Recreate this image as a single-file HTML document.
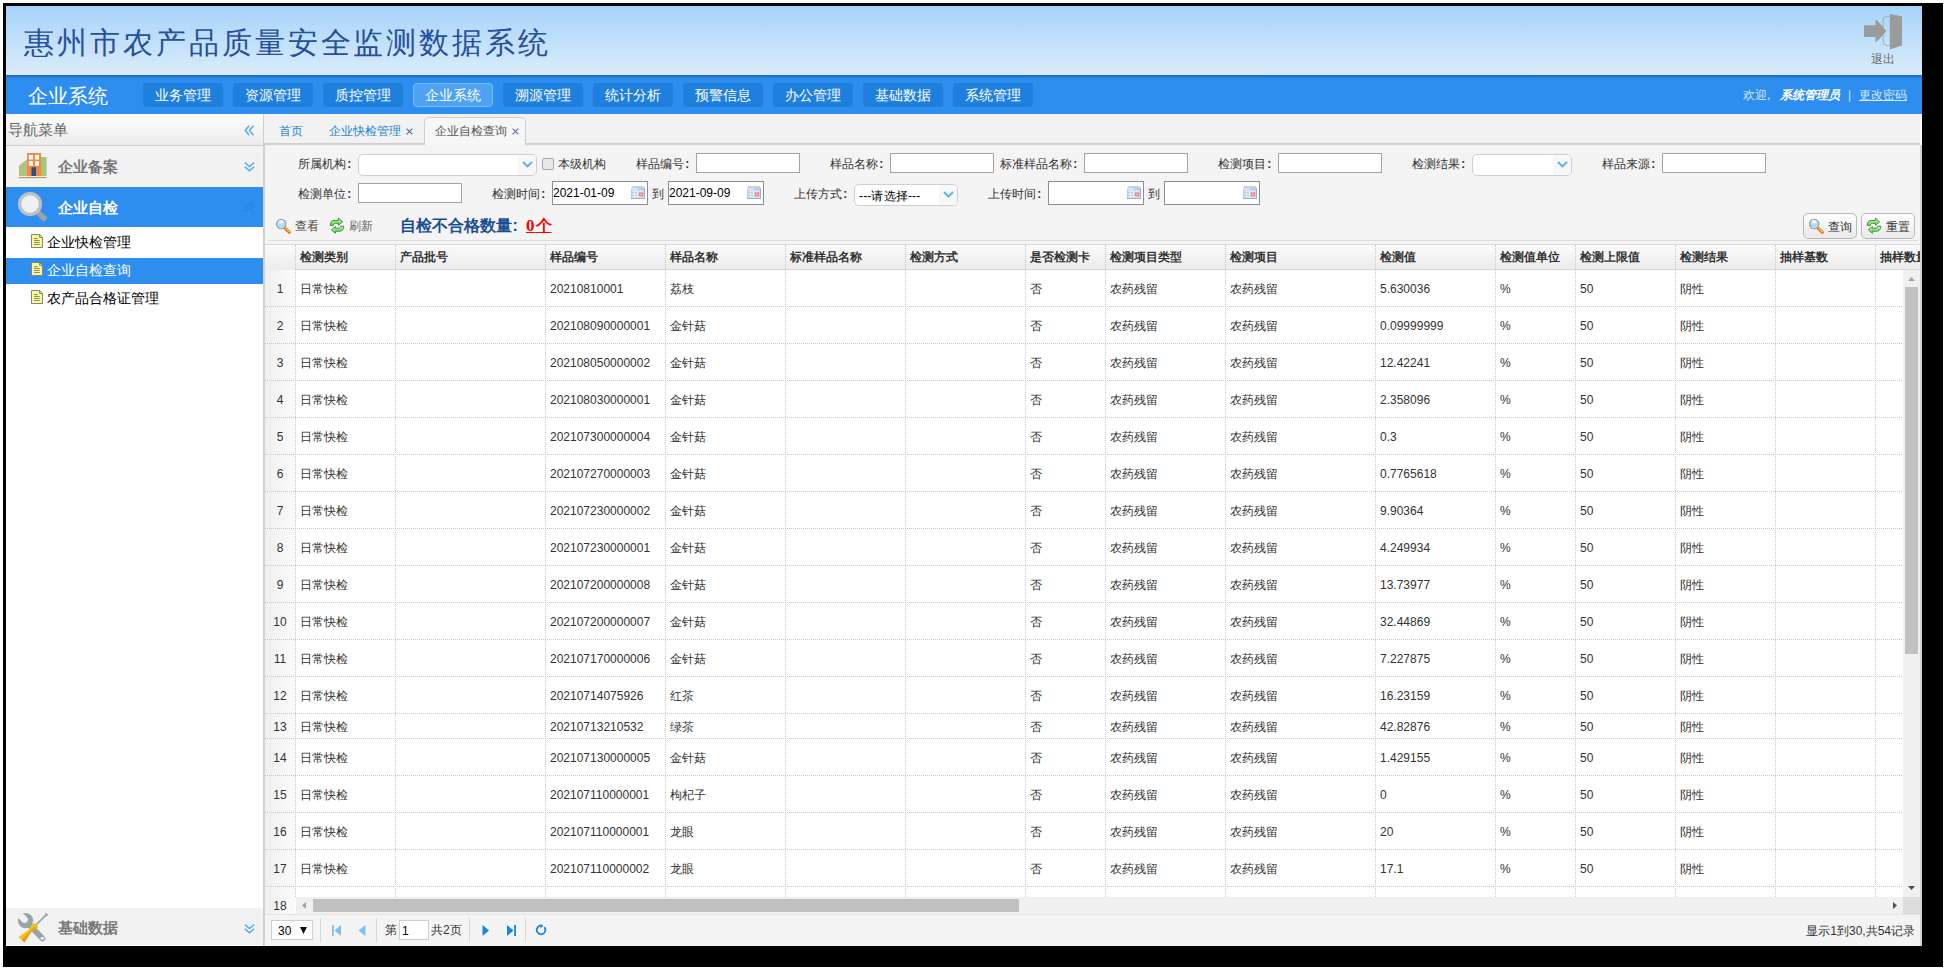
<!DOCTYPE html>
<html><head><meta charset="utf-8">
<style>
*{box-sizing:border-box;margin:0;padding:0}
html,body{width:1948px;height:972px;overflow:hidden;background:#fff;font-family:"Liberation Sans",sans-serif;font-size:12px;color:#333}
.abs{position:absolute}
#frame{position:absolute;left:3px;top:3px;width:1940px;height:964px;background:#000}
#app{position:absolute;left:6px;top:6px;width:1916px;height:940px;background:#fff;overflow:hidden}
#hdr{position:absolute;left:0;top:0;width:1916px;height:69px;background:linear-gradient(#a6d3f9,#dbecfb)}
#title{position:absolute;left:18px;top:16.5px;font-size:29.5px;color:#27509a;letter-spacing:2.95px;white-space:nowrap;line-height:40px}
#logout{position:absolute;left:1858px;top:8px;width:40px;height:56px}
#nav{position:absolute;left:0;top:69px;width:1916px;height:39px;background:linear-gradient(#1d68bd 0,#2e8ef0 4px,#2e8ef0 100%)}
#sysname{position:absolute;left:22px;top:6.5px;font-size:20px;color:#fff;line-height:28px;white-space:nowrap}
.nb{position:absolute;top:8px;width:80px;height:24px;background:#1f7fdc;border-radius:4px;color:#fff;font-size:14px;line-height:24px;text-align:center;white-space:nowrap}
.nb.on{background:#4ea2f3;border:1px solid #7dbaf6;line-height:22px}
.wl{position:absolute;top:12px;font-size:12px;color:#d6e8fb;white-space:nowrap;line-height:16px}
#welcome{position:absolute;right:14px;top:12px;font-size:12px;color:#d6e8fb;white-space:nowrap;line-height:16px}
#welcome b{font-style:italic;color:#fff}
#welcome u{color:#d6e8fb}
/* sidebar */
#side{position:absolute;left:0;top:108px;width:258px;height:832px;background:#fff;border-right:1px solid #cfcfcf}
#sh{position:absolute;left:0;top:0;width:257px;height:32px;background:linear-gradient(#fdfdfd,#ececec);border-bottom:1px solid #ccc}
#sh span{position:absolute;left:2px;top:7px;font-size:15px;color:#666;line-height:18px}
.ph{position:absolute;left:0;width:257px;background:#f2f2f2}
.ph .t{position:absolute;left:52px;font-size:15px;font-weight:bold;color:#777;line-height:18px;white-space:nowrap}
.si{position:absolute;left:0;width:257px;height:26px;font-size:14px;color:#000;line-height:25px;white-space:nowrap}
.si .ic{position:absolute;left:25px;top:4px;width:12px;height:14px}
.si span{position:absolute;left:41px;top:0}
/* main */
#main{position:absolute;left:258px;top:108px;width:1656px;height:832px;background:#f4f4f4}
#tabs{position:absolute;left:0;top:0;width:1656px;height:31px;background:#f2f2f2;border-bottom:2px solid #cfcfcf}

#tabs .tb{position:absolute;top:9px;font-size:12px;line-height:16px;color:#1a85d6;white-space:nowrap}
#tabs .x{color:#6b8fb8;font-size:12px}
#acttab{position:absolute;left:160px;top:3px;width:102px;height:28px;background:#f6f6f6;border:1px solid #cfcfcf;border-bottom:none;border-radius:5px 5px 0 0}
#form{position:absolute;left:0;top:31px;width:1658px;height:801px;background:#f4f4f4;box-shadow:inset 1px 0 #d2d2d2,inset -2px 0 #d2d2d2}
.co{display:inline-block;width:12px;padding-left:1.2px;font-style:normal;text-align:left;font-weight:bold;position:relative;top:0.5px}
.co2{display:inline-block;width:14px;padding-left:0.5px;font-style:normal;text-align:left}
.lb{position:absolute;font-size:12px;line-height:16px;color:#333;white-space:nowrap;text-align:right}
.ip{position:absolute;height:20px;background:#fff;border:1px solid #a3a3a3}
.dt{position:absolute;height:24px;background:#fff;border:1px solid #8c8c8c;font-size:12px;line-height:23px;color:#000;padding-left:0;white-space:nowrap}
.dt svg{position:absolute;right:2px;top:4px}
.sel{position:absolute;height:22px;background:#fff;border:1px solid #cfcfcf;border-radius:5px;overflow:hidden}
.sel .ar{position:absolute;right:0;top:0;width:18px;height:20px;background:#f7f7f7}
.sel svg{position:absolute;right:3px;top:6px}
.btn{position:absolute;height:26px;border:1px solid #b9b9b9;border-radius:5px;background:linear-gradient(#fefefe,#e9e9e9);font-size:12px;line-height:24px;color:#333;white-space:nowrap}
#grid{position:absolute;left:1px;top:130px;width:1655px;height:670px;background:#fff;border-top:1px solid #dcdcdc;overflow:hidden}
.gh{position:absolute;left:0;top:0;width:1655px;height:25px;background:linear-gradient(#fafafa,#ececec);border-bottom:1px solid #d6d6d6}
.c{position:absolute;font-size:12px;color:#333;white-space:nowrap;line-height:16px}
.hc{position:absolute;top:4px;font-size:12px;font-weight:bold;color:#333;white-space:nowrap;line-height:16px}
.vl{position:absolute;width:0;border-left:1px dotted #c8c8c8}
.hl{position:absolute;height:0;border-top:1px dotted #c8c8c8}
.rn{position:absolute;left:0;width:30px;background:linear-gradient(90deg,#efefef,#fbfbfb);text-align:center;font-size:12px;color:#333}
</style></head><body>
<div id="frame"></div>
<div id="app">
  <div id="hdr">
    <div id="title">惠州市农产品质量安全监测数据系统</div>
<svg class="abs" style="left:1854px;top:6px" width="46" height="46" viewBox="1860 12 46 46">
<path d="M1865 25.2 H1875.5 V20.5 Q1875.8 19.3 1877 20.3 L1885.8 30.6 Q1886.4 31.2 1885.8 31.8 L1877 41.5 Q1875.8 42.5 1875.5 41.3 V37 H1865 Q1864 37 1864 36 V26.2 Q1864 25.2 1865 25.2Z" fill="#9b9b9b"/>
<path d="M1883.2 29 V20 Q1883.2 16.5 1886.5 16.5 H1889.5 M1883.2 33.5 V42 Q1883.2 45.5 1886.5 45.5 H1889.5" fill="none" stroke="#a3a3a3" stroke-width="0.9"/>
<path d="M1889.8 14 L1902 16.2 V45.6 L1889.8 49.4Z" fill="#9b9b9b"/>
</svg>
<div class="abs" style="left:1865px;top:45px;font-size:12px;line-height:16px;color:#6a6a6a">退出</div>
  </div>
  <div id="nav">
    <div id="sysname">企业系统</div>
    <div class="nb" style="left:137px">业务管理</div>
    <div class="nb" style="left:227px">资源管理</div>
    <div class="nb" style="left:317px">质控管理</div>
    <div class="nb on" style="left:407px">企业系统</div>
    <div class="nb" style="left:497px">溯源管理</div>
    <div class="nb" style="left:587px">统计分析</div>
    <div class="nb" style="left:677px">预警信息</div>
    <div class="nb" style="left:767px">办公管理</div>
    <div class="nb" style="left:857px">基础数据</div>
    <div class="nb" style="left:947px">系统管理</div>
    <div class="wl" style="left:1737px">欢迎,</div><div class="wl" style="left:1774px;font-weight:bold;font-style:italic;color:#fff">系统管理员</div><div class="wl" style="left:1842px">|</div><div class="wl" style="left:1853px;text-decoration:underline">更改密码</div>
  </div>
  <div id="side">
    <div id="sh"><span>导航菜单</span>
      <svg class="abs" style="left:238px;top:11px" width="11" height="11" viewBox="0 0 11 11"><path d="M5.2 0.8 L1.2 5.5 L5.2 10.2 M9.5 0.8 L5.5 5.5 L9.5 10.2" fill="none" stroke="#56acec" stroke-width="1.5"/></svg>
    </div>
    <div class="ph" style="top:32px;height:41px">
      <svg class="abs" style="left:13px;top:7px" width="29" height="27" viewBox="0 0 29 27">
        <path d="M0 12.5 L8 6.5 L8 23 L0 23 Z" fill="#abc57e"/>
        <rect x="22" y="4" width="5.6" height="19" fill="#abc57e"/>
        <rect x="8" y="0" width="14" height="23" fill="#f7843f"/>
        <rect x="9.8" y="1.9" width="4.1" height="4.6" fill="#fff"/><rect x="15.9" y="1.9" width="4.1" height="4.6" fill="#fff"/>
        <rect x="9.8" y="8.2" width="4.1" height="4.6" fill="#fff"/><rect x="15.9" y="8.2" width="4.1" height="4.6" fill="#fff"/>
        <rect x="12.5" y="14.3" width="4.5" height="8.7" fill="#1f5288"/>
        <rect x="0" y="24" width="27.4" height="1.2" fill="#d4914a"/>
      </svg>
      <span class="t" style="top:12px">企业备案</span>
      <svg class="abs" style="left:238px;top:15px" width="11" height="11" viewBox="0 0 11 11"><path d="M0.8 1.5 L5.5 5.5 L10.2 1.5 M0.8 5.8 L5.5 9.8 L10.2 5.8" fill="none" stroke="#56acec" stroke-width="1.5"/></svg>
    </div>
    <div class="ph" style="top:73px;height:40px;background:#2e8ef0">
      <svg class="abs" style="left:11px;top:5px" width="32" height="32" viewBox="0 0 32 32">
        <path d="M20.5 20 L28.8 28" stroke="#98a4a3" stroke-width="5.4"/>
        <circle cx="13" cy="12" r="10.4" fill="#eef1f3" stroke="#bdc1c4" stroke-width="3.4"/>
      </svg>
      <span class="t" style="top:12px;color:#fff">企业自检</span>
      <svg class="abs" style="left:238px;top:15px" width="11" height="11" viewBox="0 0 11 11"><path d="M1 5 L5.5 1 L10 5 M1 10 L5.5 6 L10 10" fill="none" stroke="#2a82d6" stroke-width="1.3"/></svg>
    </div>
    <div class="si" style="top:116px"><svg class="ic" viewBox="0 0 12 14" width="12" height="14"><path d="M0.5 0.5 H8.6 L11.5 3.4 V13.5 H0.5 Z" fill="#fcf98e" stroke="#838383"/><path d="M8.6 0.5 V3.4 H11.5" fill="none" stroke="#838383"/><path d="M3 4.6 H6.8 M3 6.5 H8.8 M3 8.5 H8.8 M3 10.5 H8.8" stroke="#7d7d7d" stroke-width="0.9"/></svg><span>企业快检管理</span></div>
    <div class="si" style="top:144px;height:26px;background:#2e8ef0;color:#fff"><svg class="ic" viewBox="0 0 12 14" width="12" height="14"><path d="M0.5 0.5 H8.6 L11.5 3.4 V13.5 H0.5 Z" fill="#fcf98e" stroke="#838383"/><path d="M8.6 0.5 V3.4 H11.5" fill="none" stroke="#838383"/><path d="M3 4.6 H6.8 M3 6.5 H8.8 M3 8.5 H8.8 M3 10.5 H8.8" stroke="#7d7d7d" stroke-width="0.9"/></svg><span>企业自检查询</span></div>
    <div class="si" style="top:172px"><svg class="ic" viewBox="0 0 12 14" width="12" height="14"><path d="M0.5 0.5 H8.6 L11.5 3.4 V13.5 H0.5 Z" fill="#fcf98e" stroke="#838383"/><path d="M8.6 0.5 V3.4 H11.5" fill="none" stroke="#838383"/><path d="M3 4.6 H6.8 M3 6.5 H8.8 M3 8.5 H8.8 M3 10.5 H8.8" stroke="#7d7d7d" stroke-width="0.9"/></svg><span>农产品合格证管理</span></div>
    <div class="ph" style="top:794px;height:37px">
      <svg class="abs" style="left:10px;top:3px" width="34" height="34" viewBox="16 911 34 34">
<path d="M28.5 924 L42.5 938.5" stroke="#95a5a6" stroke-width="5.6" stroke-linecap="round"/>
<circle cx="25.5" cy="920.6" r="7.6" fill="#95a5a6"/>
<path d="M24.6 919.6 L16 911" stroke="#f0f0f0" stroke-width="6.6" stroke-linecap="round"/>
<ellipse cx="42.4" cy="938.3" rx="1.8" ry="1.5" fill="#f0f0f0"/>
<path d="M46.6 914.3 L35.5 925.5" stroke="#95a5a6" stroke-width="1.7"/>
<path d="M45.3 913.5 L47.6 915.7" stroke="#95a5a6" stroke-width="1.8"/>
<path d="M33.8 922.8 L37.8 926.6 L36.8 928 L31 932 L24.5 942.5 L18.5 937 L28.5 930 L32.2 924.5Z" fill="#f7c41a"/>
<path d="M37.8 926.6 L36.8 928 L31 932 L24.5 942.5 L21.5 939.8 L30 931 L34 927Z" fill="#f39c12"/>
</svg>
      <span class="t" style="top:11px">基础数据</span>
      <svg class="abs" style="left:238px;top:15px" width="11" height="11" viewBox="0 0 11 11"><path d="M0.8 1.5 L5.5 5.5 L10.2 1.5 M0.8 5.8 L5.5 9.8 L10.2 5.8" fill="none" stroke="#56acec" stroke-width="1.5"/></svg>
    </div>
  </div>
  <div id="main">
<div id="tabs">
<div class="tb" style="left:15px">首页</div>
<div class="tb" style="left:65px">企业快检管理</div><svg class="abs" style="left:141.5px;top:14px" width="7" height="7" viewBox="0 0 7 7"><path d="M0.6 0.6 L6.4 6.4 M6.4 0.6 L0.6 6.4" stroke="#4f6f98" stroke-width="1.15"/></svg>
<div id="acttab"></div>
<div class="tb" style="left:171px;color:#555">企业自检查询</div><svg class="abs" style="left:247.5px;top:14px" width="7" height="7" viewBox="0 0 7 7"><path d="M0.6 0.6 L6.4 6.4 M6.4 0.6 L0.6 6.4" stroke="#5f7496" stroke-width="1.15"/></svg>
</div>
<div id="form"><div class="lb" style="right:1564px;top:10.5px">所属机构<i class="co">:</i></div>
<div class="sel" style="left:94px;top:9px;width:179px"><div class="ar"></div><svg width="11" height="7" viewBox="0 0 11 7"><path d="M1 1 L5.5 5.5 L10 1" fill="none" stroke="#58b0ee" stroke-width="1.8"/></svg></div>
<div class="abs" style="left:278px;top:13px;width:12px;height:12px;border:1px solid #a8a8a8;border-radius:2px;background:#e8e8e8"></div>
<div class="lb" style="left:294px;top:10.5px">本级机构</div>
<div class="lb" style="right:1226px;top:10.5px">样品编号<i class="co">:</i></div>
<div class="ip" style="left:432px;top:8px;width:104px"></div>
<div class="lb" style="right:1032px;top:10.5px">样品名称<i class="co">:</i></div>
<div class="ip" style="left:626px;top:8px;width:104px"></div>
<div class="lb" style="right:838px;top:10.5px">标准样品名称<i class="co">:</i></div>
<div class="ip" style="left:820px;top:8px;width:104px"></div>
<div class="lb" style="right:644px;top:10.5px">检测项目<i class="co">:</i></div>
<div class="ip" style="left:1014px;top:8px;width:104px"></div>
<div class="lb" style="right:450px;top:10.5px">检测结果<i class="co">:</i></div>
<div class="sel" style="left:1208px;top:9px;width:100px"><div class="ar"></div><svg width="11" height="7" viewBox="0 0 11 7"><path d="M1 1 L5.5 5.5 L10 1" fill="none" stroke="#58b0ee" stroke-width="1.8"/></svg></div>
<div class="lb" style="right:260px;top:10.5px">样品来源<i class="co">:</i></div>
<div class="ip" style="left:1398px;top:8px;width:104px"></div>
<div class="lb" style="right:1564px;top:40.5px">检测单位<i class="co">:</i></div>
<div class="ip" style="left:94px;top:38px;width:104px"></div>
<div class="lb" style="right:1370px;top:40.5px">检测时间<i class="co">:</i></div>
<div class="dt" style="left:288px;top:36px;width:96px">2021-01-09<svg width="14" height="13" viewBox="0 0 14 13"><rect x="0.8" y="0" width="12.4" height="2" fill="#cfcfcf"/><rect x="0" y="2" width="14" height="11" fill="#b9ccee"/><rect x="0.5" y="2" width="6" height="2" fill="#d9e4fa"/><path d="M0 12.5H14M13.5 2V13" stroke="#9aaecb" stroke-width="1"/><path d="M1 5.2H13M1 8.2H13M1 11H13M3.6 4V12M6.6 4V12M9.6 4V12" stroke="#eef3fc" stroke-width="0.9"/><circle cx="10" cy="8.5" r="2.2" fill="#ee8462"/><path d="M10 7.5V9.6" stroke="#fff" stroke-width="0.8"/></svg></div>
<div class="lb" style="left:388px;top:40.5px">到</div>
<div class="dt" style="left:404px;top:36px;width:96px">2021-09-09<svg width="14" height="13" viewBox="0 0 14 13"><rect x="0.8" y="0" width="12.4" height="2" fill="#cfcfcf"/><rect x="0" y="2" width="14" height="11" fill="#b9ccee"/><rect x="0.5" y="2" width="6" height="2" fill="#d9e4fa"/><path d="M0 12.5H14M13.5 2V13" stroke="#9aaecb" stroke-width="1"/><path d="M1 5.2H13M1 8.2H13M1 11H13M3.6 4V12M6.6 4V12M9.6 4V12" stroke="#eef3fc" stroke-width="0.9"/><circle cx="10" cy="8.5" r="2.2" fill="#ee8462"/><path d="M10 7.5V9.6" stroke="#fff" stroke-width="0.8"/></svg></div>
<div class="lb" style="right:1068px;top:40.5px">上传方式<i class="co">:</i></div>
<div class="sel" style="left:590px;top:39px;width:104px;font-size:12px;line-height:22px;color:#000;padding-left:4px;letter-spacing:0.15px">---请选择---<div class="ar"></div><svg width="11" height="7" viewBox="0 0 11 7"><path d="M1 1 L5.5 5.5 L10 1" fill="none" stroke="#58b0ee" stroke-width="1.8"/></svg></div>
<div class="lb" style="right:874px;top:40.5px">上传时间<i class="co">:</i></div>
<div class="dt" style="left:784px;top:36px;width:96px"><svg width="14" height="13" viewBox="0 0 14 13"><rect x="0.8" y="0" width="12.4" height="2" fill="#cfcfcf"/><rect x="0" y="2" width="14" height="11" fill="#b9ccee"/><rect x="0.5" y="2" width="6" height="2" fill="#d9e4fa"/><path d="M0 12.5H14M13.5 2V13" stroke="#9aaecb" stroke-width="1"/><path d="M1 5.2H13M1 8.2H13M1 11H13M3.6 4V12M6.6 4V12M9.6 4V12" stroke="#eef3fc" stroke-width="0.9"/><circle cx="10" cy="8.5" r="2.2" fill="#ee8462"/><path d="M10 7.5V9.6" stroke="#fff" stroke-width="0.8"/></svg></div>
<div class="lb" style="left:884px;top:40.5px">到</div>
<div class="dt" style="left:900px;top:36px;width:96px"><svg width="14" height="13" viewBox="0 0 14 13"><rect x="0.8" y="0" width="12.4" height="2" fill="#cfcfcf"/><rect x="0" y="2" width="14" height="11" fill="#b9ccee"/><rect x="0.5" y="2" width="6" height="2" fill="#d9e4fa"/><path d="M0 12.5H14M13.5 2V13" stroke="#9aaecb" stroke-width="1"/><path d="M1 5.2H13M1 8.2H13M1 11H13M3.6 4V12M6.6 4V12M9.6 4V12" stroke="#eef3fc" stroke-width="0.9"/><circle cx="10" cy="8.5" r="2.2" fill="#ee8462"/><path d="M10 7.5V9.6" stroke="#fff" stroke-width="0.8"/></svg></div>
<div class="abs" style="left:7px;top:69px"><svg width="24" height="24" viewBox="0 0 24 24"><defs><radialGradient id="lgA" cx="0.5" cy="0.25" r="0.75"><stop offset="0" stop-color="#f6fcff"/><stop offset="0.6" stop-color="#a9d5fa"/><stop offset="1" stop-color="#cfe9ff"/></radialGradient></defs><path d="M14.2 14.2 L18.3 18.3" stroke="#d8541a" stroke-width="3" stroke-linecap="round"/><path d="M14.4 14.0 L18.4 18.0" stroke="#f9c22e" stroke-width="1.6" stroke-linecap="round"/><circle cx="10.2" cy="10" r="4.7" fill="url(#lgA)" stroke="#9a9a9a" stroke-width="1.1"/></svg></div>
<div class="lb" style="left:31px;top:73px;color:#444">查看</div>
<div class="abs" style="left:61px;top:69px"><svg width="24" height="24" viewBox="0 0 24 24"><defs><linearGradient id="lgR" x1="0" y1="0" x2="0" y2="1"><stop offset="0" stop-color="#c4f5ae"/><stop offset="1" stop-color="#6fd34f"/></linearGradient></defs><path d="M5.2 11.4 C5.2 8 6.8 6.4 10 6.4 L13.5 6.4 L13.5 4.2 L17.6 7.8 L13.5 11.3 L13.5 9.3 L10.6 9.3 C9.2 9.3 8.5 10.2 8.5 11.4 Z" fill="url(#lgR)" stroke="#2f8a34" stroke-width="0.9" stroke-linejoin="round"/><path d="M18.8 12.2 C18.8 15.6 17.2 17.2 14 17.2 L10.4 17.2 L10.4 19.3 L6.3 15.8 L10.4 12.6 L10.4 14.3 L13.4 14.3 C14.8 14.3 15.5 13.4 15.5 12.2 Z" fill="url(#lgR)" stroke="#2f8a34" stroke-width="0.9" stroke-linejoin="round"/></svg></div>
<div class="lb" style="left:85px;top:73px;color:#666">刷新</div>
<div class="lb" style="left:136px;top:70px;font-size:16px;line-height:22px;font-weight:bold;color:#1a4d94">自检不合格数量<i class="co2">:</i><span style="color:#f00;text-decoration:underline"><span style="font-family:'Liberation Serif',serif;font-size:17px;letter-spacing:1px">0</span>个</span></div>
<div class="btn" style="left:1539px;top:68px;width:54px"><span class="abs" style="left:0;top:0"><svg width="24" height="24" viewBox="0 0 24 24"><defs><radialGradient id="lgB" cx="0.5" cy="0.25" r="0.75"><stop offset="0" stop-color="#f6fcff"/><stop offset="0.6" stop-color="#a9d5fa"/><stop offset="1" stop-color="#cfe9ff"/></radialGradient></defs><path d="M14.2 14.2 L18.3 18.3" stroke="#d8541a" stroke-width="3" stroke-linecap="round"/><path d="M14.4 14.0 L18.4 18.0" stroke="#f9c22e" stroke-width="1.6" stroke-linecap="round"/><circle cx="10.2" cy="10" r="4.7" fill="url(#lgB)" stroke="#9a9a9a" stroke-width="1.1"/></svg></span><span class="abs" style="left:24px;top:1px">查询</span></div>
<div class="btn" style="left:1597px;top:68px;width:54px"><span class="abs" style="left:0;top:0"><svg width="24" height="24" viewBox="0 0 24 24"><defs><linearGradient id="lgS" x1="0" y1="0" x2="0" y2="1"><stop offset="0" stop-color="#c4f5ae"/><stop offset="1" stop-color="#6fd34f"/></linearGradient></defs><path d="M5.2 11.4 C5.2 8 6.8 6.4 10 6.4 L13.5 6.4 L13.5 4.2 L17.6 7.8 L13.5 11.3 L13.5 9.3 L10.6 9.3 C9.2 9.3 8.5 10.2 8.5 11.4 Z" fill="url(#lgS)" stroke="#2f8a34" stroke-width="0.9" stroke-linejoin="round"/><path d="M18.8 12.2 C18.8 15.6 17.2 17.2 14 17.2 L10.4 17.2 L10.4 19.3 L6.3 15.8 L10.4 12.6 L10.4 14.3 L13.4 14.3 C14.8 14.3 15.5 13.4 15.5 12.2 Z" fill="url(#lgS)" stroke="#2f8a34" stroke-width="0.9" stroke-linejoin="round"/></svg></span><span class="abs" style="left:24px;top:1px">重置</span></div>
<div class="abs" style="left:4px;top:95px;width:1650px;height:1px;background:#dedede"></div></div>
<!--GRID--><div id="grid"><div class="gh"></div>
<div class="rn" style="top:0;height:25px;background:linear-gradient(#fafafa,#ececec)"></div>
<div class="hc" style="left:35px">检测类别</div>
<div class="hc" style="left:135px">产品批号</div>
<div class="hc" style="left:285px">样品编号</div>
<div class="hc" style="left:405px">样品名称</div>
<div class="hc" style="left:525px">标准样品名称</div>
<div class="hc" style="left:645px">检测方式</div>
<div class="hc" style="left:765px">是否检测卡</div>
<div class="hc" style="left:845px">检测项目类型</div>
<div class="hc" style="left:965px">检测项目</div>
<div class="hc" style="left:1115px">检测值</div>
<div class="hc" style="left:1235px">检测值单位</div>
<div class="hc" style="left:1315px">检测上限值</div>
<div class="hc" style="left:1415px">检测结果</div>
<div class="hc" style="left:1515px">抽样基数</div>
<div class="hc" style="left:1615px">抽样数量</div>
<div class="rn" style="top:25px;height:37px;line-height:38px">1</div>
<div class="c" style="left:35px;top:35.5px">日常快检</div>
<div class="c" style="left:285px;top:35.5px">20210810001</div>
<div class="c" style="left:405px;top:35.5px">荔枝</div>
<div class="c" style="left:765px;top:35.5px">否</div>
<div class="c" style="left:845px;top:35.5px">农药残留</div>
<div class="c" style="left:965px;top:35.5px">农药残留</div>
<div class="c" style="left:1115px;top:35.5px">5.630036</div>
<div class="c" style="left:1235px;top:35.5px">%</div>
<div class="c" style="left:1315px;top:35.5px">50</div>
<div class="c" style="left:1415px;top:35.5px">阴性</div>
<div class="hl" style="left:0;top:61px;width:1637px"></div>
<div class="rn" style="top:62px;height:37px;line-height:38px">2</div>
<div class="c" style="left:35px;top:72.5px">日常快检</div>
<div class="c" style="left:285px;top:72.5px">202108090000001</div>
<div class="c" style="left:405px;top:72.5px">金针菇</div>
<div class="c" style="left:765px;top:72.5px">否</div>
<div class="c" style="left:845px;top:72.5px">农药残留</div>
<div class="c" style="left:965px;top:72.5px">农药残留</div>
<div class="c" style="left:1115px;top:72.5px">0.09999999</div>
<div class="c" style="left:1235px;top:72.5px">%</div>
<div class="c" style="left:1315px;top:72.5px">50</div>
<div class="c" style="left:1415px;top:72.5px">阴性</div>
<div class="hl" style="left:0;top:98px;width:1637px"></div>
<div class="rn" style="top:99px;height:37px;line-height:38px">3</div>
<div class="c" style="left:35px;top:109.5px">日常快检</div>
<div class="c" style="left:285px;top:109.5px">202108050000002</div>
<div class="c" style="left:405px;top:109.5px">金针菇</div>
<div class="c" style="left:765px;top:109.5px">否</div>
<div class="c" style="left:845px;top:109.5px">农药残留</div>
<div class="c" style="left:965px;top:109.5px">农药残留</div>
<div class="c" style="left:1115px;top:109.5px">12.42241</div>
<div class="c" style="left:1235px;top:109.5px">%</div>
<div class="c" style="left:1315px;top:109.5px">50</div>
<div class="c" style="left:1415px;top:109.5px">阴性</div>
<div class="hl" style="left:0;top:135px;width:1637px"></div>
<div class="rn" style="top:136px;height:37px;line-height:38px">4</div>
<div class="c" style="left:35px;top:146.5px">日常快检</div>
<div class="c" style="left:285px;top:146.5px">202108030000001</div>
<div class="c" style="left:405px;top:146.5px">金针菇</div>
<div class="c" style="left:765px;top:146.5px">否</div>
<div class="c" style="left:845px;top:146.5px">农药残留</div>
<div class="c" style="left:965px;top:146.5px">农药残留</div>
<div class="c" style="left:1115px;top:146.5px">2.358096</div>
<div class="c" style="left:1235px;top:146.5px">%</div>
<div class="c" style="left:1315px;top:146.5px">50</div>
<div class="c" style="left:1415px;top:146.5px">阴性</div>
<div class="hl" style="left:0;top:172px;width:1637px"></div>
<div class="rn" style="top:173px;height:37px;line-height:38px">5</div>
<div class="c" style="left:35px;top:183.5px">日常快检</div>
<div class="c" style="left:285px;top:183.5px">202107300000004</div>
<div class="c" style="left:405px;top:183.5px">金针菇</div>
<div class="c" style="left:765px;top:183.5px">否</div>
<div class="c" style="left:845px;top:183.5px">农药残留</div>
<div class="c" style="left:965px;top:183.5px">农药残留</div>
<div class="c" style="left:1115px;top:183.5px">0.3</div>
<div class="c" style="left:1235px;top:183.5px">%</div>
<div class="c" style="left:1315px;top:183.5px">50</div>
<div class="c" style="left:1415px;top:183.5px">阴性</div>
<div class="hl" style="left:0;top:209px;width:1637px"></div>
<div class="rn" style="top:210px;height:37px;line-height:38px">6</div>
<div class="c" style="left:35px;top:220.5px">日常快检</div>
<div class="c" style="left:285px;top:220.5px">202107270000003</div>
<div class="c" style="left:405px;top:220.5px">金针菇</div>
<div class="c" style="left:765px;top:220.5px">否</div>
<div class="c" style="left:845px;top:220.5px">农药残留</div>
<div class="c" style="left:965px;top:220.5px">农药残留</div>
<div class="c" style="left:1115px;top:220.5px">0.7765618</div>
<div class="c" style="left:1235px;top:220.5px">%</div>
<div class="c" style="left:1315px;top:220.5px">50</div>
<div class="c" style="left:1415px;top:220.5px">阴性</div>
<div class="hl" style="left:0;top:246px;width:1637px"></div>
<div class="rn" style="top:247px;height:37px;line-height:38px">7</div>
<div class="c" style="left:35px;top:257.5px">日常快检</div>
<div class="c" style="left:285px;top:257.5px">202107230000002</div>
<div class="c" style="left:405px;top:257.5px">金针菇</div>
<div class="c" style="left:765px;top:257.5px">否</div>
<div class="c" style="left:845px;top:257.5px">农药残留</div>
<div class="c" style="left:965px;top:257.5px">农药残留</div>
<div class="c" style="left:1115px;top:257.5px">9.90364</div>
<div class="c" style="left:1235px;top:257.5px">%</div>
<div class="c" style="left:1315px;top:257.5px">50</div>
<div class="c" style="left:1415px;top:257.5px">阴性</div>
<div class="hl" style="left:0;top:283px;width:1637px"></div>
<div class="rn" style="top:284px;height:37px;line-height:38px">8</div>
<div class="c" style="left:35px;top:294.5px">日常快检</div>
<div class="c" style="left:285px;top:294.5px">202107230000001</div>
<div class="c" style="left:405px;top:294.5px">金针菇</div>
<div class="c" style="left:765px;top:294.5px">否</div>
<div class="c" style="left:845px;top:294.5px">农药残留</div>
<div class="c" style="left:965px;top:294.5px">农药残留</div>
<div class="c" style="left:1115px;top:294.5px">4.249934</div>
<div class="c" style="left:1235px;top:294.5px">%</div>
<div class="c" style="left:1315px;top:294.5px">50</div>
<div class="c" style="left:1415px;top:294.5px">阴性</div>
<div class="hl" style="left:0;top:320px;width:1637px"></div>
<div class="rn" style="top:321px;height:37px;line-height:38px">9</div>
<div class="c" style="left:35px;top:331.5px">日常快检</div>
<div class="c" style="left:285px;top:331.5px">202107200000008</div>
<div class="c" style="left:405px;top:331.5px">金针菇</div>
<div class="c" style="left:765px;top:331.5px">否</div>
<div class="c" style="left:845px;top:331.5px">农药残留</div>
<div class="c" style="left:965px;top:331.5px">农药残留</div>
<div class="c" style="left:1115px;top:331.5px">13.73977</div>
<div class="c" style="left:1235px;top:331.5px">%</div>
<div class="c" style="left:1315px;top:331.5px">50</div>
<div class="c" style="left:1415px;top:331.5px">阴性</div>
<div class="hl" style="left:0;top:357px;width:1637px"></div>
<div class="rn" style="top:358px;height:37px;line-height:38px">10</div>
<div class="c" style="left:35px;top:368.5px">日常快检</div>
<div class="c" style="left:285px;top:368.5px">202107200000007</div>
<div class="c" style="left:405px;top:368.5px">金针菇</div>
<div class="c" style="left:765px;top:368.5px">否</div>
<div class="c" style="left:845px;top:368.5px">农药残留</div>
<div class="c" style="left:965px;top:368.5px">农药残留</div>
<div class="c" style="left:1115px;top:368.5px">32.44869</div>
<div class="c" style="left:1235px;top:368.5px">%</div>
<div class="c" style="left:1315px;top:368.5px">50</div>
<div class="c" style="left:1415px;top:368.5px">阴性</div>
<div class="hl" style="left:0;top:394px;width:1637px"></div>
<div class="rn" style="top:395px;height:37px;line-height:38px">11</div>
<div class="c" style="left:35px;top:405.5px">日常快检</div>
<div class="c" style="left:285px;top:405.5px">202107170000006</div>
<div class="c" style="left:405px;top:405.5px">金针菇</div>
<div class="c" style="left:765px;top:405.5px">否</div>
<div class="c" style="left:845px;top:405.5px">农药残留</div>
<div class="c" style="left:965px;top:405.5px">农药残留</div>
<div class="c" style="left:1115px;top:405.5px">7.227875</div>
<div class="c" style="left:1235px;top:405.5px">%</div>
<div class="c" style="left:1315px;top:405.5px">50</div>
<div class="c" style="left:1415px;top:405.5px">阴性</div>
<div class="hl" style="left:0;top:431px;width:1637px"></div>
<div class="rn" style="top:432px;height:37px;line-height:38px">12</div>
<div class="c" style="left:35px;top:442.5px">日常快检</div>
<div class="c" style="left:285px;top:442.5px">20210714075926</div>
<div class="c" style="left:405px;top:442.5px">红茶</div>
<div class="c" style="left:765px;top:442.5px">否</div>
<div class="c" style="left:845px;top:442.5px">农药残留</div>
<div class="c" style="left:965px;top:442.5px">农药残留</div>
<div class="c" style="left:1115px;top:442.5px">16.23159</div>
<div class="c" style="left:1235px;top:442.5px">%</div>
<div class="c" style="left:1315px;top:442.5px">50</div>
<div class="c" style="left:1415px;top:442.5px">阴性</div>
<div class="hl" style="left:0;top:468px;width:1637px"></div>
<div class="rn" style="top:469px;height:25px;line-height:26px">13</div>
<div class="c" style="left:35px;top:473.5px">日常快检</div>
<div class="c" style="left:285px;top:473.5px">20210713210532</div>
<div class="c" style="left:405px;top:473.5px">绿茶</div>
<div class="c" style="left:765px;top:473.5px">否</div>
<div class="c" style="left:845px;top:473.5px">农药残留</div>
<div class="c" style="left:965px;top:473.5px">农药残留</div>
<div class="c" style="left:1115px;top:473.5px">42.82876</div>
<div class="c" style="left:1235px;top:473.5px">%</div>
<div class="c" style="left:1315px;top:473.5px">50</div>
<div class="c" style="left:1415px;top:473.5px">阴性</div>
<div class="hl" style="left:0;top:493px;width:1637px"></div>
<div class="rn" style="top:494px;height:37px;line-height:38px">14</div>
<div class="c" style="left:35px;top:504.5px">日常快检</div>
<div class="c" style="left:285px;top:504.5px">202107130000005</div>
<div class="c" style="left:405px;top:504.5px">金针菇</div>
<div class="c" style="left:765px;top:504.5px">否</div>
<div class="c" style="left:845px;top:504.5px">农药残留</div>
<div class="c" style="left:965px;top:504.5px">农药残留</div>
<div class="c" style="left:1115px;top:504.5px">1.429155</div>
<div class="c" style="left:1235px;top:504.5px">%</div>
<div class="c" style="left:1315px;top:504.5px">50</div>
<div class="c" style="left:1415px;top:504.5px">阴性</div>
<div class="hl" style="left:0;top:530px;width:1637px"></div>
<div class="rn" style="top:531px;height:37px;line-height:38px">15</div>
<div class="c" style="left:35px;top:541.5px">日常快检</div>
<div class="c" style="left:285px;top:541.5px">202107110000001</div>
<div class="c" style="left:405px;top:541.5px">枸杞子</div>
<div class="c" style="left:765px;top:541.5px">否</div>
<div class="c" style="left:845px;top:541.5px">农药残留</div>
<div class="c" style="left:965px;top:541.5px">农药残留</div>
<div class="c" style="left:1115px;top:541.5px">0</div>
<div class="c" style="left:1235px;top:541.5px">%</div>
<div class="c" style="left:1315px;top:541.5px">50</div>
<div class="c" style="left:1415px;top:541.5px">阴性</div>
<div class="hl" style="left:0;top:567px;width:1637px"></div>
<div class="rn" style="top:568px;height:37px;line-height:38px">16</div>
<div class="c" style="left:35px;top:578.5px">日常快检</div>
<div class="c" style="left:285px;top:578.5px">202107110000001</div>
<div class="c" style="left:405px;top:578.5px">龙眼</div>
<div class="c" style="left:765px;top:578.5px">否</div>
<div class="c" style="left:845px;top:578.5px">农药残留</div>
<div class="c" style="left:965px;top:578.5px">农药残留</div>
<div class="c" style="left:1115px;top:578.5px">20</div>
<div class="c" style="left:1235px;top:578.5px">%</div>
<div class="c" style="left:1315px;top:578.5px">50</div>
<div class="c" style="left:1415px;top:578.5px">阴性</div>
<div class="hl" style="left:0;top:604px;width:1637px"></div>
<div class="rn" style="top:605px;height:37px;line-height:38px">17</div>
<div class="c" style="left:35px;top:615.5px">日常快检</div>
<div class="c" style="left:285px;top:615.5px">202107110000002</div>
<div class="c" style="left:405px;top:615.5px">龙眼</div>
<div class="c" style="left:765px;top:615.5px">否</div>
<div class="c" style="left:845px;top:615.5px">农药残留</div>
<div class="c" style="left:965px;top:615.5px">农药残留</div>
<div class="c" style="left:1115px;top:615.5px">17.1</div>
<div class="c" style="left:1235px;top:615.5px">%</div>
<div class="c" style="left:1315px;top:615.5px">50</div>
<div class="c" style="left:1415px;top:615.5px">阴性</div>
<div class="hl" style="left:0;top:641px;width:1637px"></div>
<div class="rn" style="top:642px;height:37px;line-height:38px">18</div>
<div class="hl" style="left:0;top:678px;width:1637px"></div>
<div class="vl" style="left:30px;top:0;height:652px"></div>
<div class="vl" style="left:130px;top:0;height:652px"></div>
<div class="vl" style="left:280px;top:0;height:652px"></div>
<div class="vl" style="left:400px;top:0;height:652px"></div>
<div class="vl" style="left:520px;top:0;height:652px"></div>
<div class="vl" style="left:640px;top:0;height:652px"></div>
<div class="vl" style="left:760px;top:0;height:652px"></div>
<div class="vl" style="left:840px;top:0;height:652px"></div>
<div class="vl" style="left:960px;top:0;height:652px"></div>
<div class="vl" style="left:1110px;top:0;height:652px"></div>
<div class="vl" style="left:1230px;top:0;height:652px"></div>
<div class="vl" style="left:1310px;top:0;height:652px"></div>
<div class="vl" style="left:1410px;top:0;height:652px"></div>
<div class="vl" style="left:1510px;top:0;height:652px"></div>
<div class="vl" style="left:1610px;top:0;height:652px"></div>
<div class="vl" style="left:1710px;top:0;height:652px"></div>
<div class="abs" style="left:1638px;top:25px;width:17px;height:627px;background:#f0f0f0"></div>
<div class="abs" style="left:1640px;top:42px;width:13px;height:367px;background:#c1c1c1"></div>
<svg class="abs" style="left:1643px;top:32px" width="7" height="4" viewBox="0 0 7 4"><path d="M0 4 L3.5 0 L7 4Z" fill="#a3a3a3"/></svg>
<svg class="abs" style="left:1643px;top:641px" width="7" height="4" viewBox="0 0 7 4"><path d="M0 0 L3.5 4 L7 0Z" fill="#505050"/></svg>
<div class="abs" style="left:31px;top:652px;width:1607px;height:17px;background:#f0f0f0"></div>
<div class="abs" style="left:48px;top:654px;width:706px;height:13px;background:#c1c1c1"></div>
<svg class="abs" style="left:37px;top:657px" width="4" height="7" viewBox="0 0 4 7"><path d="M4 0 L0 3.5 L4 7Z" fill="#a3a3a3"/></svg>
<svg class="abs" style="left:1628px;top:657px" width="4" height="7" viewBox="0 0 4 7"><path d="M0 0 L4 3.5 L0 7Z" fill="#505050"/></svg>
<div class="abs" style="left:1638px;top:652px;width:17px;height:17px;background:#dcdcdc"></div></div>
<div id="pager" class="abs" style="left:1px;top:800px;width:1655px;height:32px;background:#f4f4f4;border-top:1px solid #e4e4e4">
<div class="abs" style="left:6px;top:5px;width:42px;height:20px;background:#fff;border:1px solid #cfcfcf;font-size:12px;line-height:20px;padding-left:6px;color:#000">30<svg class="abs" style="left:28px;top:6px" width="7" height="7"><path d="M0 0 H7 L3.5 7Z" fill="#111"/></svg></div>
<div class="abs" style="left:55px;top:3px;width:1px;height:24px;background:#d6d6d6"></div>
<svg class="abs" style="left:67px;top:10px" width="9" height="11"><rect x="0" y="0" width="1.8" height="11" fill="#7fc0f0"/><path d="M9 0 V11 L2.5 5.5Z" fill="#7fc0f0"/></svg>
<svg class="abs" style="left:93px;top:10px" width="8" height="11"><path d="M7.5 0 V11 L0.5 5.5Z" fill="#7fc0f0"/></svg>
<div class="abs" style="left:111px;top:3px;width:1px;height:24px;background:#d6d6d6"></div>
<div class="lb" style="left:120px;top:7px">第</div>
<div class="abs" style="left:134px;top:5px;width:30px;height:20px;background:#fff;border:1px solid #cfcfcf;font-size:12px;line-height:20px;padding-left:2px;color:#000">1</div>
<div class="lb" style="left:166px;top:7px">共2页</div>
<div class="abs" style="left:204px;top:3px;width:1px;height:24px;background:#d6d6d6"></div>
<svg class="abs" style="left:217px;top:10px" width="8" height="11"><path d="M0.5 0 V11 L7 5.5Z" fill="#1a86e0"/></svg>
<svg class="abs" style="left:242px;top:10px" width="9" height="11"><path d="M0 0 V11 L6.5 5.5Z" fill="#1a86e0"/><rect x="7.2" y="0" width="1.8" height="11" fill="#1a86e0"/></svg>
<div class="abs" style="left:260px;top:3px;width:1px;height:24px;background:#d6d6d6"></div>
<svg class="abs" style="left:270px;top:9px" width="12" height="12" viewBox="0 0 12 12"><path d="M9.3 3.2 A4.3 4.3 0 1 1 6 1.7" fill="none" stroke="#1a86e0" stroke-width="1.8"/><path d="M5 0 L8.5 1.8 L5.5 4.2Z" fill="#1a86e0"/></svg>
<div class="lb" style="right:5px;top:8px">显示1到30,共54记录</div>
</div><!--/GRID-->

  </div>
</div>
</body></html>
